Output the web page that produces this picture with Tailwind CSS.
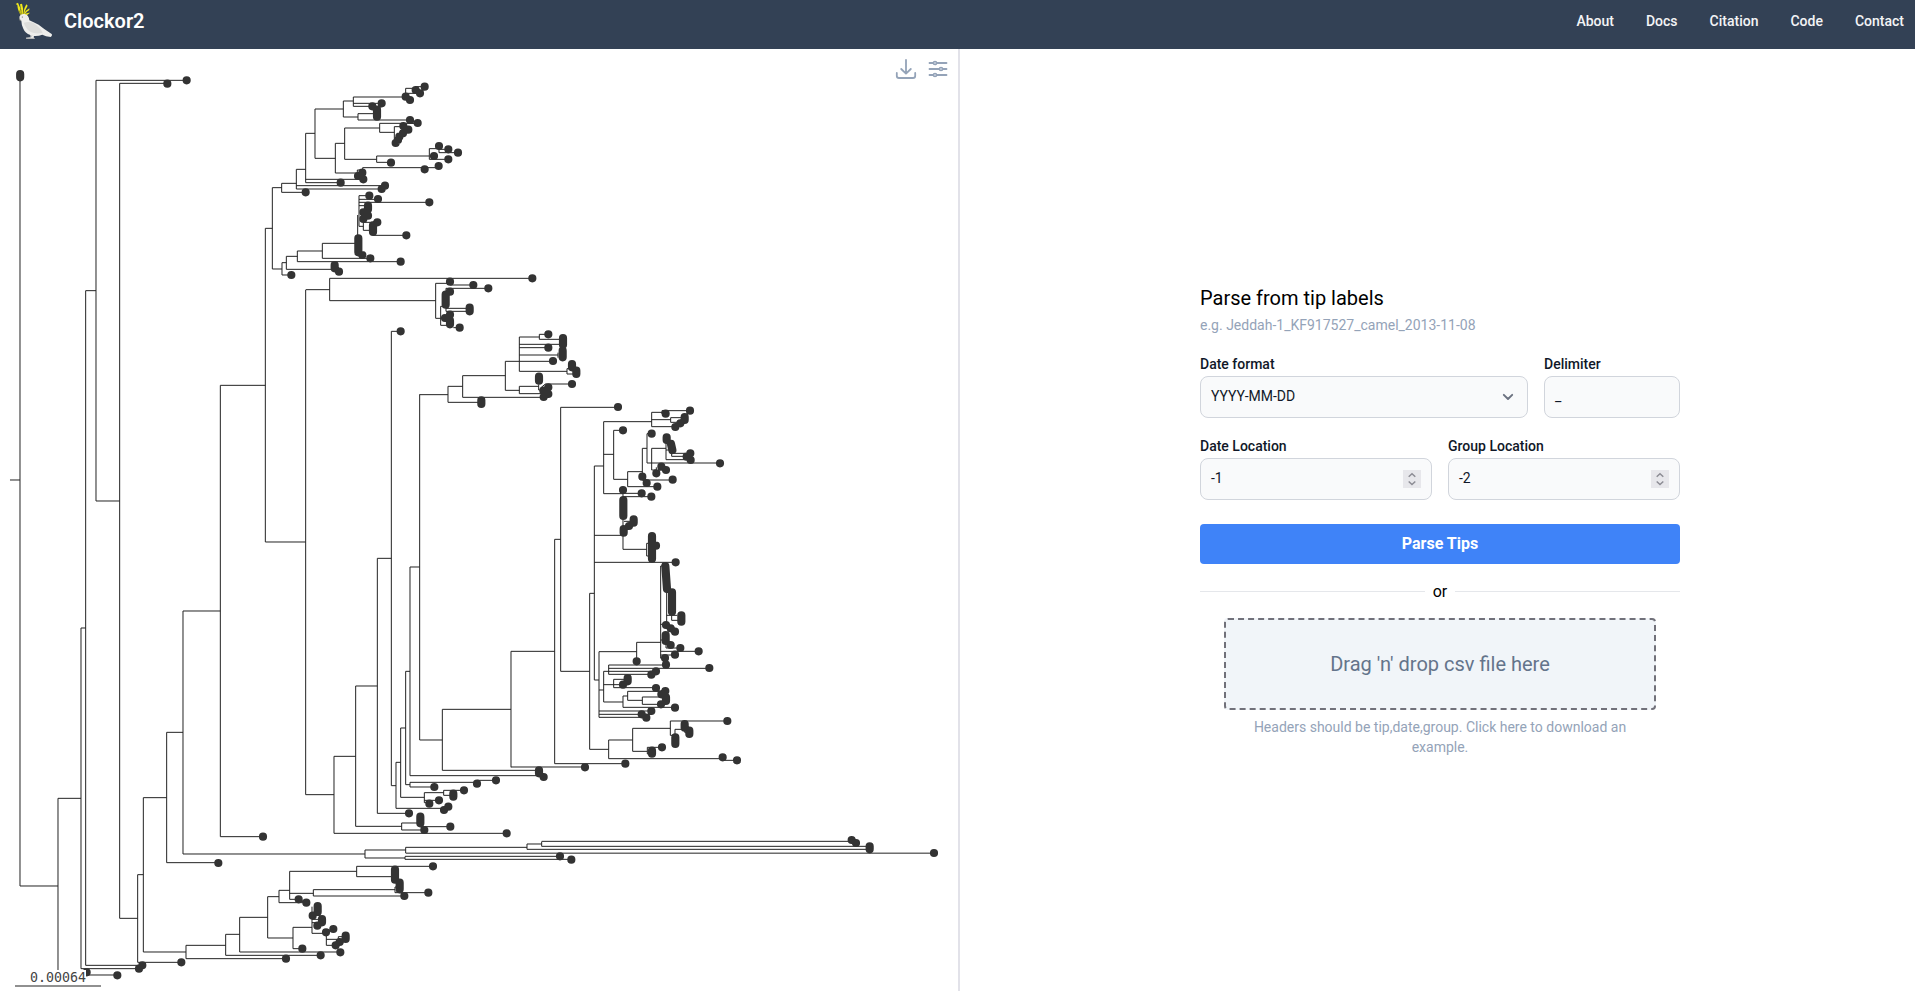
<!DOCTYPE html>
<html lang="en">
<head>
<meta charset="utf-8">
<title>Clockor2</title>
<script src="https://cdn.jsdelivr.net/npm/@tailwindcss/browser@4"></script>
</head>
<body class="flex h-screen flex-col overflow-hidden bg-white font-['Roboto',sans-serif] text-black">
<header class="flex h-[49px] shrink-0 items-start justify-between bg-[#334155] pr-[11px] pl-[15px]">
  <div class="flex items-start gap-3">
    <svg class="h-10 w-[37px]" viewBox="45 0 111 120">
      <path d="M66 50Q53 36 52 15L47 12L54 8Q62 26 67 40Q61 24 60 13L66 11Q71 26 69 40Q72 24 79 13L83 17Q75 30 72 42Q78 30 88 25L88 30Q79 35 74 44Q80 37 90 38Q82 44 75 51Z" fill="#efe81c"/>
      <path d="M61 26Q62 36 67 45M71 25L70 42M57 31Q59 39 65 46" stroke="#4a4a24" stroke-width="1.5" fill="none"/>
      <path d="M57 55Q57 62 62 64L64 54Z" fill="#8b8b80"/>
      <path d="M58 51Q61 41 73 42Q87 45 88 61Q100 66 116 74Q132 87 155 102Q158 106 152 111Q137 110 127 104Q115 109 102 108L101 112L104 116H79L78 113L92 112L91 105Q75 99 70 86Q64 73 64 62Q59 60 58 51Z" fill="#eeeeec"/>
      <path d="M71 68Q88 63 101 69Q122 84 128 98Q109 103 94 97Q78 88 71 68Z" fill="#dddddb"/>
      <path d="M78 115H104M92 112L96 106" stroke="#b5b5b5" stroke-width="2.5" fill="none"/>
      <circle cx="67" cy="51" r="1.7" fill="#555"/>
    </svg>
    <h1 class="pt-[7px] text-xl leading-7 font-semibold text-white">Clockor2</h1>
  </div>
  <nav class="flex gap-8 pt-[11px] text-sm font-medium text-gray-100">
    <a>About</a><a>Docs</a><a>Citation</a><a>Code</a><a>Contact</a>
  </nav>
</header>
<main class="flex min-h-0 flex-1">
  <section class="relative w-[960px] shrink-0 border-r-2 border-[#e2e2e9]">
    <svg class="block h-[942px] w-[958px]" viewBox="0 49 958 942" fill="none">
      <!-- backbone -->
      <g transform="translate(0 280) scale(.3333333)">
        <path stroke="#222" stroke-width="3" d="M30 600H60M60 -610V1818H174M174 2070V1555H243M243 2066V1044H257M257 2056V32H288M288 -599V663H359M288 -599H560M359 -590H502M359 -590V1915H413M413 2047V1784H430M430 2016V1553H500M500 1748V1357H549M549 1722V993H661M661 1670V316H796M796 -155V786H917M917 30V1544H1002M1002 1660V1429H1067M1067 1639V1218H1132M1132 1600V835H1174M1174 1517V154H1202M1174 1517H1188M1188 1585V1447H1202M1202 1552V1344H1217M1217 1514V1174H1230M1230 1487V861H1259M1259 343V1380H1327M1217 1514H1230M1230 1507V1521"/>
        <path stroke="#333" stroke-width="24.500" stroke-linecap="round" d="M60.500 -618v10M560 -599h.01M502 -589h.01M1202 154h.01"/>
      </g>
      <!-- upper clades -->
      <g transform="translate(240 70) scale(.3333333)">
        <path stroke="#222" stroke-width="3" d="M76 475H97M97 353V597H126M97 353H125M125 340V367H197M125 340H169M169 298V357H425M169 347H435M169 298H197M197 190V338H302M197 328H370M197 190H225M225 117V265H286M225 117H310M286 220V309H352M352 300V318M352 300H368M368 308V293H596M286 220H314M314 174V268H410M314 174H419M419 160V187H463M419 160H533M463 215V170H490M410 258V277H453M410 258H568M568 236V268H625M568 236H597V248H654M597 238H625M310 93V141H354M310 93H340M340 81V109H397M340 81H497M340 100H425M497 80V55H527V50H554M497 70H540M354 131V150H510M354 131H411M510 159H533
        M126 578V615H154M126 578H139M139 559V598H283M139 559H172M172 543V575H482M172 543H247M247 520V565H391M247 520H355M353 500V435M357 377V469H370M357 377H388M357 388H414M357 397H568M357 407H384M370 457V481H399M370 457H412M399 496H499
        M197 659H269M269 625V692H587M269 625H877M587 640V745H602M587 640H630M630 645H700M602 709V766H630M602 709H618M618 655V724H688M618 655H745M618 715H688M640 773H659"/>
        <path stroke="#333" stroke-width="24.500" stroke-linecap="round" d="M554 50h.01M527 60h.01M540 70h.01M497 80h.01M510 90h.01M425 100h.01M397 109h.01M411 119V140M510 150h.01M533 159h.01M490 168h.01M505 179h.01M489 190h.01M478 200h.01M474 210h.01M467 219h.01M597 228h.01M625 238h.01M654 248h.01M582 258h.01M625 268h.01M453 278h.01M596 288h.01M554 298h.01M367 308h.01M354 318h.01M370 328h.01M302 338h.01M435 347h.01M425 357h.01M197 367h.01
        M388 377h.01M414 387h.01M568 397h.01M384 407V418M370 427h.01M384 437h.01M370 447h.01M412 457h.01M399 466V486M499 496h.01M355 505V547M367 555h.01M391 565h.01M482 575h.01M284 585V595M297 605h.01M154 615h.01
        M877 625h.01M630 635h.01M700 645h.01M745 655h.01M630 665h.01M617 674V704M689 713V724M630 734h.01M615 744h.01M630 752V763M659 773h.01"/>
      </g>
      <!-- central clade -->
      <g transform="translate(280 320) scale(.3333333)">
        <path stroke="#222" stroke-width="3" d="M419 224H504M504 199V247H604M504 199H548M548 167V232H791M548 167H676M676 124V211H718M718 199V221H805M718 199H776M776 193V210H790M784 202L796 192H876M676 124H718M718 51V154H861M718 51H778M778 43V58H848M778 43H805M718 73H848M718 83H805M718 105H834M834 98V113M718 124H819M861 146V162H889M861 146H876"/>
        <path stroke="#333" stroke-width="24.500" stroke-linecap="round" d="M805 43h.01M849 54V74M805 83h.01M848 92V112M819 123h.01M876 132V142M889 152V162M777 170V182M876 192h.01M805 202h.01M790 212h.01M805 222h.01M791 231h.01M604 241V252"/>
      </g>
      <!-- right clade, upper half -->
      <g transform="translate(540 390) scale(.3333333)">
        <path stroke="#222" stroke-width="3" d="M44 1121V448H62M62 844V52H234M163 870V228H191M191 95V311H249M191 95H335M191 193H221M335 67V110H406M335 67H366M366 72V62H450M366 72H377M335 89H392M392 83V97H425M392 83H435M221 121V268H263M221 121H249M263 245V290H352M263 245H307M307 270V175H321M307 270H398M321 131V219H540M321 131H335M335 175V240H349V232M335 175H378M378 152V209H452M378 180H395V199H440M395 190H451M249 300V478H320M249 310H305M249 320H334M252 394H275M163 436H249M320 460V498M320 460H330M320 498H330M163 517H407"/>
        <path stroke="#333" stroke-width="24.500" stroke-linecap="round" d="M234 51h.01M450 62h.01M377 71h.01M434 81V90M421 100h.01M406 111h.01M249 121h.01M335 131h.01M380 142V150M393 162L397 180M451 190h.01M440 200h.01M452 210h.01M540 220h.01M364 230h.01M378 240h.01M349 250h.01M307 260h.01M398 269h.01M320 279h.01M352 290h.01M249 300h.01M305 310h.01M334 320h.01M250 330V378M281 388V398M267 408h.01M251 417V428M336 438V506M348 467h.01M407 517h.01"/>
      </g>
      <!-- right clade, lower half -->
      <g transform="translate(540 560) scale(.3333333)">
        <path stroke="#222" stroke-width="3" d="M44 611H256M62 334H149M149 100V568H206M149 100H163M163 360H177M362 295V18H376M380 90V190M380 166H412M395 166V181H415M362 193H378M362 240H377M378 250V264H421M362 274H476M362 285H405M362 294H375M290 304V247H362M177 275V472H319M177 275H290M206 315V343H334M206 315H378M206 325H508M206 334H348M191 334H206M191 334V426H249M177 390H191M191 374H249M221 358V383H348M221 358H255M249 408V442H405M249 408H263M263 394V421H307M263 394H376M307 411V433H363M307 411H378M177 453H334M177 463H305M206 540V596H548M206 540H278M278 505V574H322M278 505H391M391 483V526H400M391 483H562M405 530V508H434V517H448M322 562V582M322 562H366M322 582H330M548 601H591M-87 621H135"/>
        <path stroke="#333" stroke-width="24.500" stroke-linecap="round" d="M376 18L381 87M396 97V155M424 166V185M378 195h.01M392 205h.01M405 215h.01M377 225V243M392 255h.01M421 264h.01M476 274h.01M405 284h.01M375 294h.01M290 304h.01M378 314h.01M508 324h.01M348 334h.01M334 344h.01M263 354V364M249 374h.01M348 384h.01M376 393h.01M364 403h.01M378 412V423M363 433h.01M405 443h.01M334 453h.01M305 463h.01M319 473h.01M562 483h.01M434 492V503M448 512V522M406 532V552M366 562h.01M336 572V581M548 592h.01M591 601h.01M256 611h.01M135 622h.01"/>
      </g>
      <!-- lower centre -->
      <g transform="translate(260 680) scale(.3333333)">
        <path stroke="#222" stroke-width="3" d="M753 262V-86H884M547 88H753M547 88V271H837M450 287H837M222 460H740M287 439H425M425 429V450H493M425 429H481M481 440H571M352 400H447M408 385H552M422 352H493M493 338V368H508M493 338H551M551 331V346H579M551 331H612M493 361H537M450 307H651V301H708M450 321H523M437 502V519M437 502H801M801 492V508M801 492H845M845 485V499"/>
        <path stroke="#333" stroke-width="24.500" stroke-linecap="round" d="M837 271V280M851 291h.01M708 301h.01M651 311h.01M523 321h.01M612 331h.01M580 341V350M537 361h.01M508 371h.01M565 380h.01M552 390h.01M447 400h.01M481 410V430M571 440h.01M493 450h.01M740 460h.01"/>
      </g>
      <!-- longest branches -->
      <g transform="translate(520 820) scale(.3333333)">
        <path stroke="#222" stroke-width="3" d="M65 64H995M65 79H1049M21 88H1049M-343 99.500H1242M-345 109H120M-345 118H154"/>
        <path stroke="#333" stroke-width="24.500" stroke-linecap="round" d="M995 60h.01M1008 69h.01M1049 79V88M1242 99h.01M120 109h.01M154 119h.01"/>
      </g>
      <!-- bottom clade -->
      <g transform="translate(0 780) scale(.3333333)">
        <path stroke="#222" stroke-width="3" d="M661 170H789M500 248H655M549 222H1095M1095 210V234H1215M1095 210H1217M1215 230V238M430 516H558M558 496V536H858M558 496H677M677 463V526H962M677 463H719M719 412V516H1021M719 412H803M803 350V474H879M803 350H837M837 331V368H919M837 331H869M869 274V358H896M869 274H1070M1070 259V290H1185M1070 259H1299M869 340H940M940 329V348H1213M940 329H1185M1185 321V338H1285M1185 321H1199M879 442V506H907M879 442H936M936 380V460H978M936 418H966M936 428H966M979 457V496H1007M979 478H1015V470H1037M413 547H544M257 556H427M243 566H417M262 570V585H352"/>
        <path stroke="#333" stroke-width="24.500" stroke-linecap="round" d="M789 170h.01M655 249h.01M1299 259h.01M1185 269V299M1199 308V328M1285 338h.01M1213 348h.01M896 358h.01M919 368h.01M953 378V396M938 407h.01M966 417V427M952 437h.01M1000 447h.01M978 457h.01M1037 467V477M1019 486h.01M1007 496h.01M907 506h.01M1021 517h.01M962 526h.01M858 536h.01M544 547h.01M427 556h.01M417 566h.01M260 577h.01M352 586h.01"/>
      </g>
    </svg>
    <div class="absolute bottom-0 left-[15px] flex h-[21px] w-[71px] flex-col items-end bg-white pb-1 font-['DejaVu_Sans_Mono',monospace] text-[13.3px] leading-4 text-[#444]">0.00064</div>
    <div class="absolute bottom-1 left-[15px] h-0.5 w-[86px] bg-[#909090]"></div>
    <div class="absolute top-[9px] right-[10px] flex gap-[11px] text-[#94a3b8]">
      <svg class="h-[22px] w-[22px]" viewBox="0 0 22 22" fill="none" stroke="currentColor" stroke-width="1.8" stroke-linecap="round" stroke-linejoin="round"><path d="M11 2V15.500M6.200 11L11 15.700L15.800 11M1.800 15V18Q1.800 20 4 20H18Q20.200 20 20.200 18V15"/></svg>
      <svg class="h-[22px] w-[20px]" viewBox="0 0 20 22" fill="none" stroke="currentColor" stroke-width="1.8" stroke-linecap="round"><path d="M1.500 5H5.500M9 5H18.500M1.500 11H11.500M15 11H18.500M1.500 17H5.500M9 17H18.500"/><g fill="#c3ccd9" stroke-width="1.3"><circle cx="7" cy="5" r="1.700"/><circle cx="13" cy="11" r="1.700"/><circle cx="7" cy="17" r="1.700"/></g></svg>
    </div>
  </section>
  <section class="flex flex-1 justify-center pt-[235px]">
    <form class="ml-[5px] flex w-[480px] shrink-0 flex-col">
      <h2 class="text-xl leading-7">Parse from tip labels</h2>
      <p class="mt-[3px] text-sm text-[#94a3b8]">e.g. Jeddah-1_KF917527_camel_2013-11-08</p>
      <div class="mt-[19px] flex gap-4 text-sm text-gray-900">
        <label class="w-[328px] font-medium">Date format
          <span class="mt-0.5 flex h-[42px] items-center justify-between rounded-lg border border-gray-300 bg-gray-50 pr-3 pl-2.5 font-normal"><span class="-mt-0.5">YYYY-MM-DD</span>
            <svg class="h-3.5 w-3.5" viewBox="0 0 14 14" fill="none" stroke="#6b7280" stroke-width="1.9" stroke-linecap="round" stroke-linejoin="round"><path d="M2.800 4.800L7 9L11.200 4.800"/></svg>
          </span>
        </label>
        <label class="w-[136px] font-medium">Delimiter
          <span class="mt-0.5 flex h-[42px] items-center rounded-lg border border-gray-300 bg-gray-50 px-2.5 font-normal"><span class="-mt-0.5">_</span></span>
        </label>
      </div>
      <div class="mt-[18px] flex gap-4 text-sm text-gray-900">
        <label class="flex-1 font-medium">Date Location
          <span class="mt-0.5 flex h-[42px] items-center justify-between rounded-lg border border-gray-300 bg-gray-50 px-2.5 font-normal"><span class="-mt-0.5">-1</span>
            <svg class="h-[18px] w-[18px] bg-[#e7e7eb]" viewBox="0 0 18 18" fill="none" stroke="#8c8c94" stroke-width="1.5"><path d="M5.700 6.800L9 3.700L12.300 6.800M5.700 11.500L9 14.500L12.300 11.500"/></svg>
          </span>
        </label>
        <label class="flex-1 font-medium">Group Location
          <span class="mt-0.5 flex h-[42px] items-center justify-between rounded-lg border border-gray-300 bg-gray-50 px-2.5 font-normal"><span class="-mt-0.5">-2</span>
            <svg class="h-[18px] w-[18px] bg-[#e7e7eb]" viewBox="0 0 18 18" fill="none" stroke="#8c8c94" stroke-width="1.5"><path d="M5.700 6.800L9 3.700L12.300 6.800M5.700 11.500L9 14.500L12.300 11.500"/></svg>
          </span>
        </label>
      </div>
      <button type="button" class="mt-6 h-10 rounded bg-[#3f83f8] text-base font-bold text-white">Parse Tips</button>
      <div class="mt-4 flex items-center gap-2 leading-6">
        <span class="-mt-px h-px flex-1 bg-gray-200"></span><span>or</span><span class="-mt-px h-px flex-1 bg-gray-200"></span>
      </div>
      <div class="mx-6 mt-3.5 flex h-[92px] items-center justify-center rounded border-2 border-dashed border-[#71717a] bg-slate-100 text-xl text-[#64748b]">Drag 'n' drop csv file here</div>
      <p class="mx-12 mt-[7px] text-center text-sm text-[#94a3b8]">Headers should be tip,date,group. Click here to download an example.</p>
    </form>
  </section>
</main>
</body>
</html>
